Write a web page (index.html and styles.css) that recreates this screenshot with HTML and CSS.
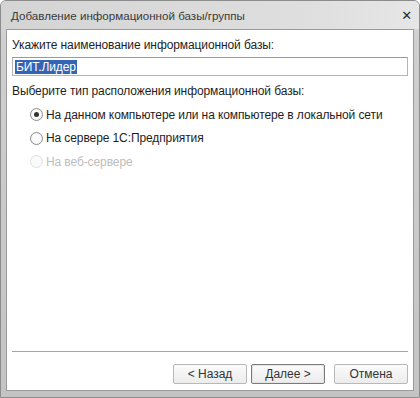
FILE: index.html
```html
<!DOCTYPE html>
<html>
<head>
  <meta charset="utf-8">
  <title>Добавление информационной базы/группы</title>
  <link rel="stylesheet" href="styles.css">
</head>
<body>
  <div class="window">
    <div class="titlebar">
      <span class="title">Добавление информационной базы/группы</span>
      <span class="close">&#x2715;</span>
    </div>
    <div class="client">
      <div class="content">
        <p class="label">Укажите наименование информационной базы:</p>
        <div class="input"><span class="sel">БИТ.Лидер</span></div>
        <p class="label">Выберите тип расположения информационной базы:</p>
        <ul class="radios">
          <li><span class="radio checked"></span>На данном компьютере или на компьютере в локальной сети</li>
          <li><span class="radio"></span>На сервере 1С:Предприятия</li>
          <li class="disabled"><span class="radio"></span>На веб-сервере</li>
        </ul>
      </div>
      <div class="footer">
        <button class="btn">&lt; Назад</button>
        <button class="btn default">Далее &gt;</button>
        <button class="btn cancel">Отмена</button>
      </div>
    </div>
  </div>
</body>
</html>
```

FILE: styles.css
```css
html, body {
  margin: 0;
  padding: 0;
  background: #fff;
}
.window {
  width: 420px;
  height: 398px;
  box-sizing: border-box;
  border: 1px solid #8c8c8c;
  border-radius: 6px 6px 0 0;
  background: linear-gradient(to bottom, #dadada, #cfcfcf 40px, #c4c4c4);
  display: flex;
  flex-direction: column;
  font-family: "Liberation Sans", Arial, sans-serif;
  font-size: 12px;
  letter-spacing: -0.1px;
  color: #1e1e1e;
  white-space: nowrap;
}
.titlebar {
  height: 28px;
  display: flex;
  align-items: center;
  justify-content: space-between;
  padding: 0 7px 0 10px;
  background: linear-gradient(to right, #d4d4d4, #dedede 70%, #e6e6e6);
  border-radius: 5px 5px 0 0;
}
.title {
  font-size: 11.6px;
  letter-spacing: 0;
  color: #3a3a3a;
}
.close {
  font-family: "DejaVu Sans", sans-serif;
  font-size: 13px;
  font-weight: bold;
  color: #2e2e2e;
}
.client {
  flex: 1;
  margin: 0 5px 6px 5px;
  border: 1px solid #9a9a9a;
  background: #fff;
  display: flex;
  flex-direction: column;
}
.content {
  flex: 1;
  padding: 0 5px;
}
.label {
  margin: 7px 0 4px;
  line-height: 16px;
}
.input {
  height: 19px;
  border: 1px solid #b5b5b5;
  border-top-color: #9a9a9a;
  padding: 2px 2px 0;
  box-sizing: border-box;
  line-height: 14px;
}
.sel {
  background: #3465b5;
  color: #fff;
  padding: 0 1px;
}
.radios {
  list-style: none;
  margin: 3px 0 0;
  padding: 0 0 0 18px;
}
.radios li {
  display: flex;
  align-items: center;
  height: 23.5px;
}
.radio {
  width: 11px;
  height: 11px;
  border: 1px solid #8e8e8e;
  border-radius: 50%;
  background: radial-gradient(circle, #fff 40%, #e8e8e8);
  margin-right: 3px;
  position: relative;
}
.radio.checked::after {
  content: "";
  position: absolute;
  left: 3px;
  top: 3px;
  width: 5px;
  height: 5px;
  border-radius: 50%;
  background: #333;
}
.disabled {
  color: #bdbdbd;
}
.disabled .radio {
  border-color: #e0e0e0;
  background: #fafafa;
}
.footer {
  border-top: 1px solid #a5a5a5;
  margin: 0 5px;
  padding: 12px 0 6px;
  display: flex;
  justify-content: flex-end;
  gap: 4px;
}
.btn {
  width: 74px;
  height: 20px;
  font-family: inherit;
  font-size: 12px;
  color: #333;
  border: 1px solid #b8b8b8;
  border-radius: 2px;
  background: linear-gradient(to bottom, #fbfbfb, #ececec);
  padding: 0;
}
.btn.default {
  border-color: #7a7a7a;
  box-shadow: inset 0 0 0 1px #e4e4e4;
}
.btn.cancel {
  margin-left: 5px;
}
```
